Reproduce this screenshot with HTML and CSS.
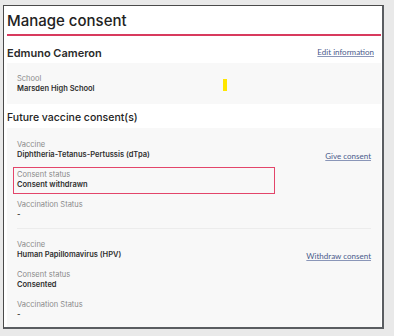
FILE: index.html
```html
<!DOCTYPE html>
<html lang="en">
<head>
<meta charset="utf-8">
<title>Manage consent</title>
<link rel="stylesheet" href="styles.css">
</head>
<body>
<div class="card">
  <h1 class="title">Manage consent</h1>
  <div class="name-row">
    <h2 class="name">Edmuno Cameron</h2>
    <a class="link" href="#">Edit information</a>
  </div>
  <div class="panel panel-school">
    <div class="field">
      <div class="label">School</div>
      <div class="value">Marsden High School</div>
    </div>
    <span class="marker"></span>
  </div>
  <h3 class="section">Future vaccine consent(s)</h3>
  <div class="panel panel-vaccines">
    <div class="vaccine">
      <div class="row">
        <div class="field">
          <div class="label">Vaccine</div>
          <div class="value">Diphtheria-Tetanus-Pertussis (dTpa)</div>
        </div>
        <a class="link" href="#">Give consent</a>
      </div>
      <div class="field field-alert">
        <div class="label">Consent status</div>
        <div class="value">Consent withdrawn</div>
      </div>
      <div class="field">
        <div class="label">Vaccination Status</div>
        <div class="value">-</div>
      </div>
    </div>
    <hr class="divider">
    <div class="vaccine">
      <div class="row">
        <div class="field">
          <div class="label">Vaccine</div>
          <div class="value">Human Papillomavirus (HPV)</div>
        </div>
        <a class="link" href="#">Withdraw consent</a>
      </div>
      <div class="field">
        <div class="label">Consent status</div>
        <div class="value">Consented</div>
      </div>
      <div class="field">
        <div class="label">Vaccination Status</div>
        <div class="value">-</div>
      </div>
    </div>
  </div>
</div>
</body>
</html>
```
FILE: styles.css
```css
html, body {
  margin: 0;
  padding: 0;
}
body {
  background: #e9e9e9;
  font-family: Inter, "Noto Sans", sans-serif;
  color: #333;
  padding: 5px 0 0 3px;
  height: 336px;
  box-sizing: border-box;
  overflow: hidden;
}
.card {
  width: 374px;
  height: 321px;
  background: #fff;
  border-left: 1px solid #4a4a4a;
  border-top: 1px solid #4a4a4a;
  border-right: 2px solid #5a5d61;
  border-bottom: 2px solid #5a5d61;
  padding: 0 1px 0 3px;
  display: flex;
  flex-direction: column;
}
.title {
  margin: 0;
  font-size: 15px;
  font-weight: 500;
  line-height: 26px;
  padding-top: 2px;
  color: #222;
  border-bottom: 2px solid #d83a5e;
}
.name-row {
  display: flex;
  justify-content: space-between;
  align-items: center;
  padding: 8px 7px 2px 0;
  height: 17px;
}
.name {
  margin: 0;
  font-size: 11px;
  font-weight: 600;
  line-height: 14px;
  color: #2a2a2a;
}
.link {
  font-family: Lato, "Liberation Sans", sans-serif;
  font-size: 8px;
  color: #4a5b8c;
  text-decoration: underline;
  text-decoration-color: #8a96b8;
}
.name-row .link {
  padding-bottom: 2px;
}
.panel {
  background: #f8f8f8;
  padding: 0 10px;
}
.panel-school {
  position: relative;
  height: 41px;
  padding-top: 8px;
  box-sizing: border-box;
}
.marker {
  position: absolute;
  left: 216px;
  top: 16px;
  width: 4px;
  height: 12px;
  background: #ffe600;
}
.section {
  margin: 0;
  font-size: 10.5px;
  font-weight: 500;
  line-height: 14px;
  padding: 7px 0 3px;
  color: #222;
}
.panel-vaccines {
  flex: 1;
  padding-top: 9px;
}
.vaccine {
  display: flex;
  flex-direction: column;
  gap: 3px;
}
.row {
  display: flex;
  justify-content: space-between;
  align-items: flex-end;
}
.row .link {
  padding-bottom: 3px;
  line-height: 10px;
}
.field {
  width: 262px;
  box-sizing: border-box;
  margin-left: -4px;
  padding: 2px 3px 3px;
  border: 1px solid transparent;
}
.field-alert {
  border-color: #e3456a;
}
.label {
  font-size: 7.5px;
  line-height: 10px;
  color: #8a8a8a;
}
.value {
  font-size: 7.5px;
  line-height: 10px;
  font-weight: 600;
  color: #2e2e2e;
}
.divider {
  border: 0;
  border-top: 1px solid #ececec;
  margin: 4px 0 8px 0;
}
```
